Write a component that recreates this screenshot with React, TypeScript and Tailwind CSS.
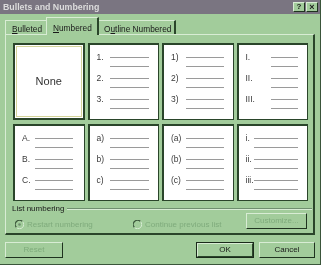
import React from "react";

type BoxDef =
  | { none: true }
  | { labels: string[]; lw: string; lineW: string };

const row1: BoxDef[] = [
  { none: true },
  { labels: ["1.", "2.", "3."], lw: "w-[13px]", lineW: "w-[39px]" },
  { labels: ["1)", "2)", "3)"], lw: "w-[15px]", lineW: "w-[38px]" },
  { labels: ["I.", "II.", "III."], lw: "w-[25px]", lineW: "w-[27px]" },
];
const row2: BoxDef[] = [
  { labels: ["A.", "B.", "C."], lw: "w-[13px]", lineW: "w-[38px]" },
  { labels: ["a)", "b)", "c)"], lw: "w-[13px]", lineW: "w-[39px]" },
  { labels: ["(a)", "(b)", "(c)"], lw: "w-[15px]", lineW: "w-[38px]" },
  { labels: ["i.", "ii.", "iii."], lw: "w-[8px]", lineW: "w-[44px]" },
];

function Box({ def }: { def: BoxDef }) {
  if ("none" in def) {
    return (
      <div className="h-[77px] border-2 border-[#2a452a] bg-white p-px">
        <div className="h-full border border-[#d4d49a] flex items-center justify-center text-[11px] text-[#333]">
          None
        </div>
      </div>
    );
  }
  return (
    <div className="h-[77px] border-t-2 border-l-2 border-r border-b border-[#2a452a] bg-white pl-[7px] pt-[8px]">
      {def.labels.map((l) => (
        <div key={l} className="flex h-[21px]">
          <div className={`${def.lw} text-[8.5px] leading-[9px] text-[#3a3a3a] shrink-0`}>{l}</div>
          <div className={`${def.lineW} flex flex-col pt-[4px] gap-[8px]`}>
            <div className="h-px bg-[#9a9a9a]" />
            <div className="h-px bg-[#9a9a9a]" />
          </div>
        </div>
      ))}
    </div>
  );
}

function Radio({ checked }: { checked?: boolean }) {
  return (
    <svg width="9" height="9" viewBox="0 0 9 9" className="shrink-0">
      <path d="M7.5 1.5 A4 4 0 0 0 1.5 7.5" fill="none" stroke="#3a553a" strokeWidth="1.2" />
      <path d="M1.5 7.5 A4 4 0 0 0 7.5 1.5" fill="none" stroke="#d8ecd4" strokeWidth="1" />
      {checked && <circle cx="4.5" cy="4.5" r="1.3" fill="#6f8f6f" />}
    </svg>
  );
}

function Btn({
  children,
  w,
  disabled,
  def,
}: {
  children: React.ReactNode;
  w: string;
  disabled?: boolean;
  def?: boolean;
}) {
  return (
    <div
      className={`${w} h-[16px] flex items-center justify-center text-[8px] ${
        def ? "border border-[#1a2a1a]" : ""
      }`}
    >
      <div
        className={`w-full h-full flex items-center justify-center border-t border-l border-[#d8ecd4] border-r border-b ${
          def ? "border-r-[#2a452a] border-b-[#2a452a]" : "border-r-[#1f331f] border-b-[#1f331f]"
        } ${disabled ? "text-[#7fab7c]" : "text-[#1a1a1a]"}`}
      >
        {children}
      </div>
    </div>
  );
}

export default function App() {
  return (
    <div className="w-[321px] h-[265px] bg-[#a2cc9b] font-['Liberation_Sans',Arial,sans-serif] border-r border-b border-[#3a553a] overflow-hidden">
      <div className="[will-change:transform]">
        {/* Title bar */}
        <div className="h-[14px] bg-[#7a7581] flex items-center justify-between pl-[3px] pr-[2px]">
          <span className="text-[8.8px] font-bold text-[#dcdcdc] leading-none">Bullets and Numbering</span>
          <div className="flex gap-px">
            <div className="w-[12px] h-[10px] bg-[#a2cc9b] border-t border-l border-[#d8ecd4] border-r border-b border-r-[#1f331f] border-b-[#1f331f] flex items-center justify-center text-[8px] font-bold leading-none text-[#1a1a1a]">
              ?
            </div>
            <div className="w-[12px] h-[10px] bg-[#a2cc9b] border-t border-l border-[#d8ecd4] border-r border-b border-r-[#1f331f] border-b-[#1f331f] flex items-center justify-center text-[9px] font-bold leading-none text-[#1a1a1a]">
              ×
            </div>
          </div>
        </div>

        {/* Tabs */}
        <div className="flex items-end h-[20px] pl-[5px] text-[8.3px] text-[#1a1a1a]">
          <div className="w-[42px] h-[14px] border-t border-l border-[#d8ecd4] pl-[6px] pt-[4px] leading-none">
            <span className="underline">B</span>ulleted
          </div>
          <div className="relative z-10 -mb-px w-[53px] -ml-[1px] h-[18px] bg-[#a2cc9b] border-t border-l border-[#d8ecd4] border-r-2 border-r-[#2a452a] pl-[6px] pt-[6px] leading-none">
            <span className="underline">N</span>umbered
          </div>
          <div className="w-[77px] h-[14px] border-t border-r-2 border-[#d8ecd4] border-r-[#2a452a] pl-[5px] pt-[4px] leading-none">
            O<span className="underline">u</span>tline Numbered
          </div>
        </div>

        {/* Panel */}
        <div className="ml-[5px] w-[310px] h-[201px] border-t border-l border-[#d8ecd4] border-r-2 border-b-2 border-r-[#2a452a] border-b-[#2a452a] pl-[7px] pt-[8px]">
          <div className="w-[295px] grid grid-cols-4 gap-x-[3px] gap-y-[4px]">
            {[...row1, ...row2].map((d, i) => (
              <Box key={i} def={d} />
            ))}
          </div>
          <div className="flex items-center mt-[3px] -ml-[1px] h-[9px]">
            <span className="text-[8px] leading-none text-[#1a1a1a]">List numbering</span>
            <div className="flex-1 ml-[3px] mr-[1px] flex flex-col">
              <div className="h-px bg-[#6f8f6f]" />
              <div className="h-px bg-[#d8ecd4]" />
            </div>
          </div>
          <div className="flex items-start">
            <div className="flex items-center gap-[3px] mt-[7px] ml-[2px] w-[118px] text-[8px] leading-none text-[#7fab7c]">
              <Radio checked />
              <span>Restart numbering</span>
            </div>
            <div className="flex items-center gap-[3px] mt-[7px] w-[113px] text-[8px] leading-none text-[#7fab7c]">
              <Radio />
              <span>Continue previous list</span>
            </div>
            <Btn w="w-[61px]" disabled>
              Customize...
            </Btn>
          </div>
        </div>

        {/* Bottom buttons */}
        <div className="flex mt-[7px] pl-[5px]">
          <Btn w="w-[58px]" disabled>
            Reset
          </Btn>
          <div className="w-[133px]" />
          <Btn w="w-[58px]" def>
            OK
          </Btn>
          <div className="w-[5px]" />
          <Btn w="w-[56px]">Cancel</Btn>
        </div>
      </div>
    </div>
  );
}
